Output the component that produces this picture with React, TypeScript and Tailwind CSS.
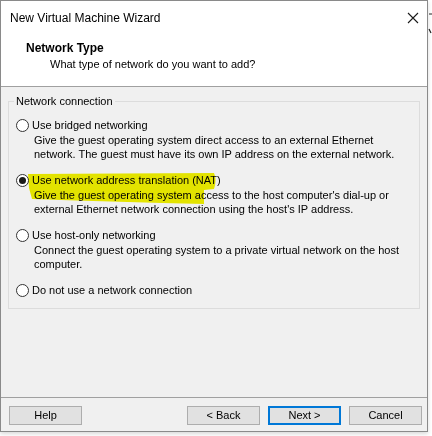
import type { ReactNode } from "react";

const font = { fontFamily: '"Liberation Sans", Arial, sans-serif' };

function Radio({ checked }: { checked?: boolean }) {
  return (
    <span className="w-[13px] h-[13px] rounded-full border border-[#333333] bg-white flex items-center justify-center shrink-0">
      {checked && <span className="w-[7px] h-[7px] rounded-full bg-[#1a1a1a]" />}
    </span>
  );
}

function Option({
  label,
  checked,
  children,
}: {
  label: string;
  checked?: boolean;
  children?: ReactNode;
}) {
  return (
    <div className="flex flex-col">
      <div className="flex items-center h-[15px] gap-[3px] ml-[2px]">
        <Radio checked={checked} />
        <span className="leading-[15px]">{label}</span>
      </div>
      {children && <div className="pl-[20px] leading-[14px] whitespace-nowrap">{children}</div>}
    </div>
  );
}

function Button({ label, focused }: { label: string; focused?: boolean }) {
  return (
    <button
      className={
        focused
          ? "w-[73px] h-[19px] bg-[#e1e1e1] border-2 border-[#0078d7] text-[11px] leading-none text-black"
          : "w-[73px] h-[19px] bg-[#e1e1e1] border border-[#adadad] text-[11px] leading-none text-black"
      }
    >
      {label}
    </button>
  );
}

export default function App() {
  return (
    <div className="relative w-[432px] h-[436px] bg-white overflow-hidden text-[11px] text-black" style={font}>
      <div className="w-[428px] h-[432px] border border-[#8a8a8a] flex flex-col bg-[#f0f0f0] shadow-[0_2px_4px_rgba(0,0,0,0.15)]">
        {/* title bar */}
        <div className="h-[31px] bg-white flex items-center justify-between pl-[9px] pr-[7px] shrink-0">
          <span className="text-[12px] text-[#000000] pt-[2px]">New Virtual Machine Wizard</span>
          <svg width="12" height="12" viewBox="0 0 12 12" className="mr-[1px] mt-[2px]">
            <path d="M1 1 L11 11 M11 1 L1 11" stroke="#1a1a1a" strokeWidth="1.1" />
          </svg>
        </div>

        {/* header */}
        <div className="bg-white border-b border-[#a0a0a0] pt-[9px] pb-[15px] pl-[25px] shrink-0">
          <div className="font-bold text-[12px] leading-[14px]">Network Type</div>
          <div className="leading-[14px] mt-[2px] pl-[24px]">What type of network do you want to add?</div>
        </div>

        {/* content */}
        <div className="flex-1 px-[7px] pt-[7px]">
          <fieldset className="border border-[#dcdcdc] px-[5px] pt-[10px] pb-[10px] flex flex-col gap-[12px]">
            <legend className="px-[2px] leading-[14px]">Network connection</legend>
            <Option label="Use bridged networking">
              Give the guest operating system direct access to an external Ethernet
              <br />
              network. The guest must have its own IP address on the external network.
            </Option>
            <Option label="Use network address translation (NAT)" checked>
              Give the guest operating system access to the host computer's dial-up or
              <br />
              external Ethernet network connection using the host's IP address.
            </Option>
            <Option label="Use host-only networking">
              Connect the guest operating system to a private virtual network on the host
              <br />
              computer.
            </Option>
            <Option label="Do not use a network connection" />
          </fieldset>
        </div>

        {/* footer */}
        <div className="border-t border-[#a0a0a0] pt-[8px] pb-[6px] pl-[8px] pr-[5px] flex items-center shrink-0">
          <Button label="Help" />
          <div className="flex-1" />
          <div className="flex gap-[8px]">
            <Button label="< Back" />
            <Button label="Next >" focused />
            <Button label="Cancel" />
          </div>
        </div>
      </div>

      {/* highlighter marks drawn on top of the screenshot */}
      <svg
        className="absolute left-0 top-0 pointer-events-none mix-blend-multiply"
        width="432"
        height="436"
        viewBox="0 0 432 436"
      >
        <path
          d="M28 174 L214 173 Q217 180 214 189 L204 190 L204 204 Q120 202 32 199 L29 188 Z"
          fill="#f2f200"
        />
      </svg>

      {/* bits of the window behind */}
      <svg className="absolute left-[428px] top-0" width="4" height="40" viewBox="0 0 4 40">
        <path d="M1 14 L4 14 M1 29 L3 33" stroke="#222" strokeWidth="1.2" />
      </svg>
    </div>
  );
}
